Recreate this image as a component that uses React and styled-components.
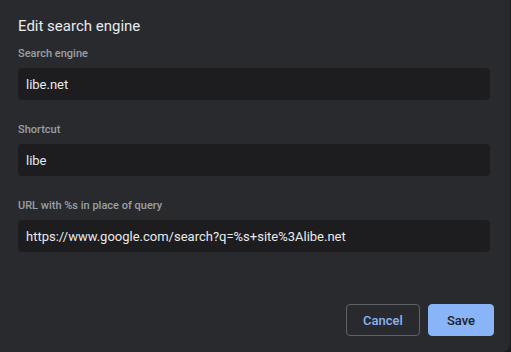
import * as React from 'react';
import styled, { createGlobalStyle } from 'styled-components';


/* styles */
const GlobalStyle = createGlobalStyle`
  html, body {
    margin: 0;
    padding: 0;
    background: #1c1c1e;
  }
  #root {
    width: 511px;
    height: 352px;
  }
`;

const Dialog = styled('div')`
  box-sizing: border-box;
  width: 510px;
  height: 352px;

  display: flex;
  flex-direction: column;

  padding: 16px 16px 16px 18px;

  background: #292a2d;
  border-radius: 0 0 8px 0;
  font-family: Roboto, "Liberation Sans", sans-serif;
`;

const Title = styled('h2')`
  margin: 0 0 10px;

  font-size: 15px;
  font-weight: 400;
  line-height: 20px;
  color: #e8eaed;
`;

const Field = styled('div')`
  display: flex;
  flex-direction: column;
  gap: 6px;

  margin-bottom: ${({ last }) => (last ? 0 : '22px')};
`;

const Label = styled('label')`
  height: 16px;

  font-size: 11px;
  font-weight: 500;
  line-height: 16px;
  color: #9aa0a6;
`;

const Input = styled('div')`
  box-sizing: border-box;
  width: 472px;
  height: 32px;

  display: flex;
  align-items: center;

  padding: 0 8px;

  background: #1d1d1f;
  border-radius: 4px;

  font-size: 13px;
  color: #e8eaed;
`;

const Footer = styled('div')`
  margin-top: auto;

  display: flex;
  flex-direction: row;
  justify-content: flex-end;
  gap: 8px;
`;

const Button = styled(({ primary, ...props }) => <button {...props} />)`
  box-sizing: border-box;
  height: 32px;

  padding: 0 ${({ primary }) => (primary ? '18px' : '16px')};

  border: 1px solid ${({ primary }) => (primary ? '#8ab4f8' : '#5f6368')};
  border-radius: 4px;
  background: ${({ primary }) => (primary ? '#8ab4f8' : 'transparent')};

  font-family: Roboto, "Liberation Sans", sans-serif;
  font-size: 13px;
  font-weight: 500;
  color: ${({ primary }) => (primary ? '#202124' : '#8ab4f8')};
`;


const fields = [
    { label: 'Search engine', value: 'libe.net' },
    { label: 'Shortcut', value: 'libe' },
    { label: 'URL with %s in place of query', value: 'https://www.google.com/search?q=%s+site%3Alibe.net' },
];

const App = () => {


    return (
        <>
            <GlobalStyle/>

            <Dialog>
                <Title>Edit search engine</Title>

                {fields.map(({ label, value }, i) => (
                    <Field key={label} last={i === fields.length - 1}>
                        <Label>{label}</Label>
                        <Input>{value}</Input>
                    </Field>
                ))}

                <Footer>
                    <Button>Cancel</Button>
                    <Button primary>Save</Button>
                </Footer>
            </Dialog>
        </>
    )
};

export default App;
